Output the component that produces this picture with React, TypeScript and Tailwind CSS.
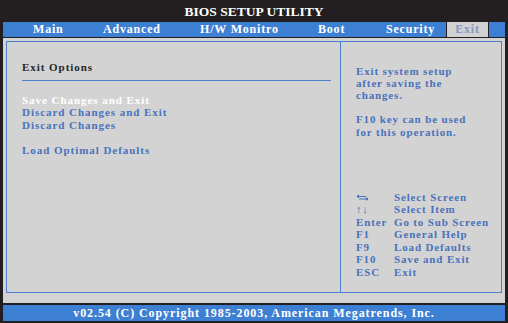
import React from "react";

const serif = { fontFamily: '"Liberation Serif", "Times New Roman", serif' };

export default function App() {
  const keys: [React.ReactNode, string][] = [
    [
      <svg width="13" height="7" viewBox="0 0 13 7" className="mt-[3px]">
        <path d="M1 2.5 H10 M1 2.5 L3 1 M1 2.5 L3 3.5" stroke="#4a72bc" strokeWidth="1.2" fill="none" />
        <path d="M3 5 H12 M12 5 L10 3.8 M12 5 L10 6.2" stroke="#4a72bc" strokeWidth="1.2" fill="none" />
      </svg>,
      "Select Screen",
    ],
    ["↑↓", "Select Item"],
    ["Enter", "Go to Sub Screen"],
    ["F1", "General Help"],
    ["F9", "Load Defaults"],
    ["F10", "Save and Exit"],
    ["ESC", "Exit"],
  ];
  return (
    <div
      className="w-[508px] h-[323px] bg-[#231f20] flex flex-col font-bold overflow-hidden"
      style={serif}
    >
      <div className="h-[22px] flex items-center justify-center text-white text-[13.5px] pt-[3px]">
        BIOS SETUP UTILITY
      </div>
      <div className="h-[15px] mx-[3px] bg-[#3d7fd3] flex items-stretch text-white text-[12px] tracking-[0.8px] leading-[15px]">
        <div className="w-[30px]" />
        <div className="w-[70px]">Main</div>
        <div className="w-[97px]">Advanced</div>
        <div className="w-[118px]">H/W Monitro</div>
        <div className="w-[68px]">Boot</div>
        <div className="w-[60px]">Security</div>
        <div className="w-[42px] bg-[#d2d2d2] text-[#8797bd] text-center border-l border-[#231f20]">
          Exit
        </div>
        <div className="flex-1 border-l border-[#231f20]" />
      </div>
      <div className="h-px" />
      <div className="mx-[3px] h-[265px] bg-[#d3d3d3] p-[3px] pb-[10px]">
        <div className="h-full border border-[#4f7fcf] flex text-[11px] leading-[12.5px] text-[#4a72bc]">
          <div className="w-[334px] border-r border-[#4f7fcf] pl-[15px] pt-[19px] tracking-[0.95px]">
            <div className="text-[#262626]">Exit Options</div>
            <div className="mt-[6px] w-[309px] h-px bg-[#4f7fcf]" />
            <div className="mt-[13px] text-white">Save Changes and Exit</div>
            <div>Discard Changes and Exit</div>
            <div>Discard Changes</div>
            <div className="h-[12.5px]" />
            <div>Load Optimal Defaults</div>
          </div>
          <div className="flex-1 pl-[15px] pt-[22.5px] tracking-[0.85px]">
            <div className="leading-[12.2px]">
              <div>Exit system setup</div>
              <div>after saving the</div>
              <div>changes.</div>
              <div className="h-[12.2px]" />
              <div>F10 key can be used</div>
              <div>for this operation.</div>
            </div>
            <div className="mt-[53px]">
              {keys.map(([k, d], i) => (
                <div key={i} className="flex">
                  <div className="w-[38px]">{k}</div>
                  <div>{d}</div>
                </div>
              ))}
            </div>
          </div>
        </div>
      </div>
      <div className="h-[2px]" />
      <div className="h-[16px] mx-[3px] bg-[#3d7fd3] flex items-center justify-center text-white text-[12px] tracking-[0.92px] leading-[16px]">
        v02.54 (C) Copyright 1985-2003, American Megatrends, Inc.
      </div>
    </div>
  );
}
